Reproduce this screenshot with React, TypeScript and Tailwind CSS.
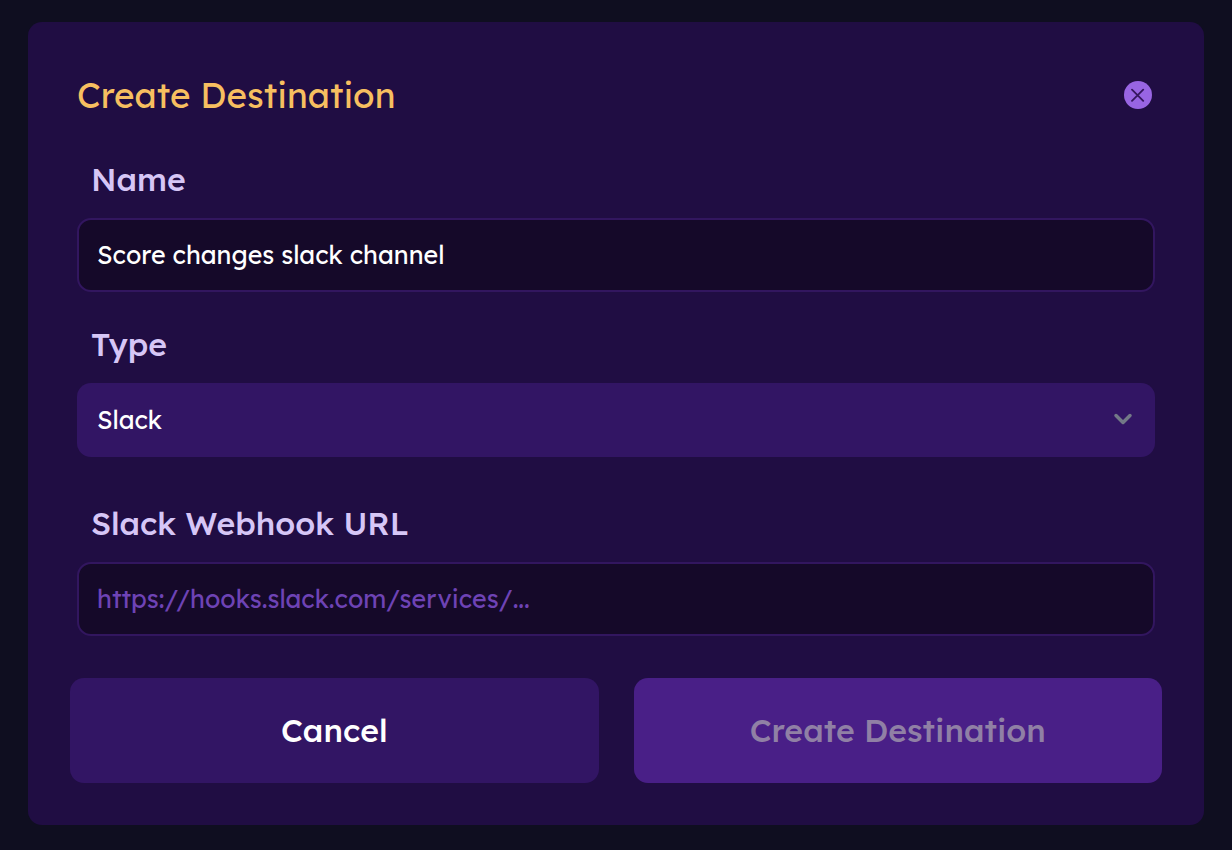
import React, { useState } from 'react';
import { ChevronDown } from 'lucide-react';

const labelClass = 'block pl-3.5 text-[32px] leading-10 font-medium text-[#d6c6f6]';
const inputClass =
  'mt-[19px] block h-[74px] w-full rounded-[14px] border-2 border-[#32165f] bg-[#150929] px-[18px] pb-0.5 text-[25px] text-white placeholder:text-[#6e43b5] outline-none';

export default function App() {
  const [name, setName] = useState('Score changes slack channel');
  const [type, setType] = useState('slack');
  const [webhookUrl, setWebhookUrl] = useState('');

  return (
    <div className="min-h-screen bg-[#0f0e20] px-7 pt-[22px] pb-[25px] font-['Lexend','Inter','Open_Sans',sans-serif]">
      <form
        role="dialog"
        aria-labelledby="dialog-title"
        className="rounded-[14px] bg-[#200d43] px-[42px] pt-[49px] pb-[42px]"
        onSubmit={(e) => e.preventDefault()}
      >
        <div className="px-[7px]">
          {/* Header */}
          <div className="flex items-center justify-between pr-[3px]">
            <h2 id="dialog-title" className="text-[35px] leading-[48px] text-[#f7bf60]">
              Create Destination
            </h2>
            <button
              type="button"
              aria-label="Close"
              className="flex size-7 items-center justify-center rounded-full bg-[#9865e3] text-[#35165f]"
            >
              <svg viewBox="0 0 14 14" className="size-3.5" fill="none" stroke="currentColor" strokeWidth="1.8" strokeLinecap="round">
                <path d="M1 1.7l11.2 11.2M12.2 1.7L1 12.9" />
              </svg>
            </button>
          </div>

          <div className="mt-10">
            <label htmlFor="name" className={labelClass}>Name</label>
            <input id="name" className={inputClass} value={name} onChange={(e) => setName(e.target.value)} />
          </div>

          <div className="mt-8">
            <label htmlFor="type" className={labelClass}>Type</label>
            <div className="relative mt-[19px]">
              <select
                id="type"
                value={type}
                onChange={(e) => setType(e.target.value)}
                className="block h-[74px] w-full appearance-none rounded-[14px] bg-[#321564] px-5 text-[25px] text-white outline-none"
              >
                <option value="slack">Slack</option>
              </select>
              <ChevronDown
                size={28}
                strokeWidth={3}
                className="pointer-events-none absolute top-[22px] right-[18px] text-[#737987]"
              />
            </div>
          </div>

          <div className="mt-[46px]">
            <label htmlFor="webhook" className={labelClass}>Slack Webhook URL</label>
            <input
              id="webhook"
              className={inputClass}
              placeholder="https://hooks.slack.com/services/..."
              value={webhookUrl}
              onChange={(e) => setWebhookUrl(e.target.value)}
            />
          </div>
        </div>

        {/* Actions */}
        <div className="mt-[42px] grid grid-cols-2 gap-[35px] text-[32px] font-medium">
          <button type="button" className="h-[105px] rounded-[14px] bg-[#321564] pb-0.5 text-white">
            Cancel
          </button>
          <button type="submit" disabled className="h-[105px] rounded-[14px] bg-[#491f87] pb-0.5 text-[#9080a5]">
            Create Destination
          </button>
        </div>
      </form>
    </div>
  );
}
